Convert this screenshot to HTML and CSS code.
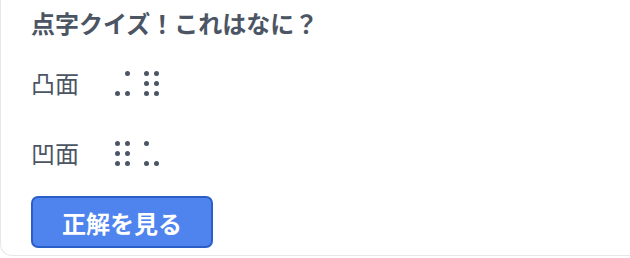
FILE: index.html
```html
<!DOCTYPE html>
<html lang="ja">
<head>
    <meta charset="UTF-8">
    <meta name="viewport" content="width=device-width, initial-scale=1.0">
    <title>点字クイズ</title>
    <link rel="stylesheet" href="styles.css">
</head>
<body>
    <div class="card">
        <h2 class="quiz-title">点字クイズ！これはなに？</h2>
        <div class="quiz-row">
            <span class="label">凸面</span>
            <div class="braille">
                <div class="cell">
                    <i></i><i class="on"></i>
                    <i></i><i></i>
                    <i class="on"></i><i class="on"></i>
                </div>
                <div class="cell">
                    <i class="on"></i><i class="on"></i>
                    <i class="on"></i><i class="on"></i>
                    <i class="on"></i><i class="on"></i>
                </div>
            </div>
        </div>
        <div class="quiz-row">
            <span class="label">凹面</span>
            <div class="braille">
                <div class="cell">
                    <i class="on"></i><i class="on"></i>
                    <i class="on"></i><i class="on"></i>
                    <i class="on"></i><i class="on"></i>
                </div>
                <div class="cell">
                    <i class="on"></i><i></i>
                    <i></i><i></i>
                    <i class="on"></i><i class="on"></i>
                </div>
            </div>
        </div>
        <button class="answer-btn">正解を見る</button>
    </div>
</body>
</html>
```

FILE: styles.css
```css
body {
    font-family: "Noto Sans CJK JP", "Noto Sans", sans-serif;
    background: #ffffff;
    margin: 0;
    padding: 0;
}

.card {
    border-left: 1px solid #e5e7eb;
    border-bottom: 1px solid #e5e7eb;
    border-bottom-left-radius: 12px;
    padding: 5px 28px 7px 30px;
    height: 243px;
    box-sizing: content-box;
}

.quiz-title {
    margin: 0;
    font-size: 24px;
    line-height: 36px;
    font-weight: 700;
    color: #4b5563;
}

.quiz-row {
    display: flex;
    align-items: center;
    height: 36px;
    margin-top: 24px;
}

.quiz-row + .quiz-row {
    margin-top: 34px;
}

.label {
    width: 84px;
    font-size: 24px;
    line-height: 36px;
    color: #4b5563;
}

.braille {
    display: flex;
    gap: 14px;
}

.cell {
    display: grid;
    grid-template-columns: repeat(2, 5px);
    grid-auto-rows: 5px;
    gap: 5px;
}

.cell i {
    display: block;
    width: 5px;
    height: 5px;
    border-radius: 50%;
}

.cell i.on {
    background-color: #4b5563;
}

.answer-btn {
    margin-top: 25px;
    width: 182px;
    height: 52px;
    font-family: inherit;
    font-size: 24px;
    font-weight: 700;
    color: #ffffff;
    background-color: #4f84ee;
    border: 2px solid #2b5fc7;
    border-radius: 7px;
    cursor: pointer;
}
```
